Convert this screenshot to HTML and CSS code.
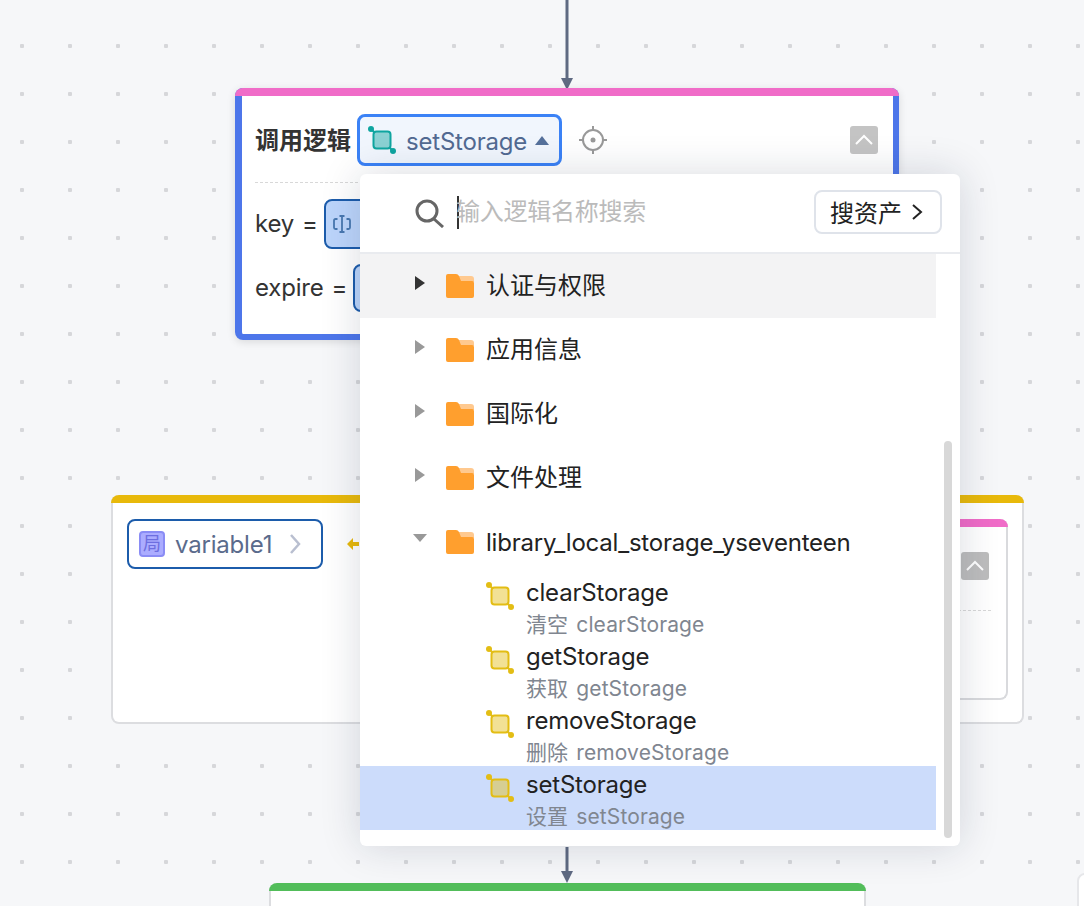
FILE: index.html
```html
<!DOCTYPE html>
<html lang="zh-CN">

<head>
    <meta charset="UTF-8">
    <title>调用逻辑</title>
    <link rel="stylesheet" href="styles.css">
</head>

<body>
    <svg class="defs" width="0" height="0">
        <symbol id="logic-icon" viewBox="0 0 28 28">
            <rect x="5.5" y="5.5" width="17" height="17" rx="3" fill="currentColor" fill-opacity="0.45" stroke="currentColor" stroke-width="2"></rect>
            <path d="M3 3l3 3M22 22l3 3" stroke="currentColor" stroke-width="2"></path>
            <circle cx="3" cy="3" r="3" fill="currentColor"></circle>
            <circle cx="25" cy="25" r="3" fill="currentColor"></circle>
        </symbol>
        <symbol id="folder-icon" viewBox="0 0 28 24">
            <path d="M13 2h12a3 3 0 0 1 3 3v3H13z" fill="#ffc98f"></path>
            <path d="M2 0h8q2 0 3 2l2 5h11a2 2 0 0 1 2 2v13a2 2 0 0 1-2 2H2a2 2 0 0 1-2-2V2a2 2 0 0 1 2-2z" fill="#ff9f2e"></path>
        </symbol>
        <symbol id="collapse-icon" viewBox="0 0 28 28">
            <path d="M6 18l8-8 8 8" fill="none" stroke="#fff" stroke-width="2"></path>
        </symbol>
    </svg>

    <main class="canvas">
        <!-- Connectors -->
        <svg class="arrow arrow-top" width="14" height="90" viewBox="0 0 14 90">
            <path d="M7 0v79" stroke="#5f6a82" stroke-width="3"></path>
            <path d="M1 78h12l-6 12z" fill="#5f6a82"></path>
        </svg>
        <svg class="arrow arrow-bottom" width="14" height="36" viewBox="0 0 14 36">
            <path d="M7 0v25" stroke="#5f6a82" stroke-width="3"></path>
            <path d="M1 24h12l-6 12z" fill="#5f6a82"></path>
        </svg>

        <!-- Call node -->
        <section class="node node-call">
            <div class="call-head">
                <span class="call-title">调用逻辑</span>
                <button class="logic-select">
                    <svg class="logic-select-icon" width="28" height="28"><use href="#logic-icon"></use></svg>
                    <span class="logic-select-name">setStorage</span>
                    <i class="caret-up"></i>
                </button>
                <svg class="locate" width="28" height="28" viewBox="0 0 28 28">
                    <circle cx="14" cy="14" r="10" fill="none" stroke="#999" stroke-width="2"></circle>
                    <circle cx="14" cy="14" r="2.5" fill="#999"></circle>
                    <path d="M14 0v4M14 24v4M0 14h4M24 14h4" stroke="#999" stroke-width="2"></path>
                </svg>
                <svg class="collapse" width="28" height="28"><use href="#collapse-icon"></use></svg>
            </div>
            <div class="param">
                <span class="param-name">key</span>
                <span class="param-eq">=</span>
                <span class="param-value">
                    <svg width="20" height="20" viewBox="0 0 20 20">
                        <path d="M5.500 5H3.500Q2 5 2 6.500v7Q2 15 3.500 15h2M14.500 5h2Q18 5 18 6.500v7q0 1.500-1.500 1.500h-2M7.500 2h5M7.500 18h5M10 2v16" fill="none" stroke="#4878b0" stroke-width="1.800"></path>
                    </svg>
                </span>
            </div>
            <div class="param param-short">
                <span class="param-name">expire</span>
                <span class="param-eq">=</span>
                <span class="param-value"></span>
            </div>
        </section>

        <!-- Variable assignment node -->
        <section class="node node-assign">
            <div class="var-pill">
                <span class="var-badge">局</span>
                <span class="var-name">variable1</span>
                <svg width="12" height="22" viewBox="0 0 12 22">
                    <path d="M2 2l8 9-8 9" fill="none" stroke="#b9bfd0" stroke-width="2.500"></path>
                </svg>
            </div>
            <svg class="assign-arrow" width="12" height="12" viewBox="0 0 12 12">
                <path d="M6 0v4h6v4H6v4L0 6z" fill="#e8b90b"></path>
            </svg>
            <div class="node node-inner">
                <svg class="collapse collapse-inner" width="28" height="28"><use href="#collapse-icon"></use></svg>
                <div class="inner-rule"></div>
            </div>
        </section>

        <section class="node node-next"></section>
        <section class="edge-card"></section>

        <!-- Logic picker dropdown -->
        <div class="picker">
            <div class="picker-search">
                <svg class="search-icon" width="30" height="30" viewBox="0 0 30 30">
                    <circle cx="12" cy="13" r="10" fill="none" stroke="#666" stroke-width="3"></circle>
                    <path d="M19 21l9 8" stroke="#666" stroke-width="3"></path>
                </svg>
                <span class="search-input">输入逻辑名称搜索</span>
                <button class="asset-btn">
                    <span class="asset-btn-text">搜资产</span>
                    <svg width="12" height="18" viewBox="0 0 12 18">
                        <path d="M2 2l8 7-8 7" fill="none" stroke="#222" stroke-width="2"></path>
                    </svg>
                </button>
            </div>
            <div class="picker-body">
                <ul class="tree">
                    <li class="tree-row is-hover">
                        <i class="tri-right"></i>
                        <svg class="folder" width="28" height="24"><use href="#folder-icon"></use></svg>
                        <span class="tree-label-cn">认证与权限</span>
                    </li>
                    <li class="tree-row">
                        <i class="tri-right"></i>
                        <svg class="folder" width="28" height="24"><use href="#folder-icon"></use></svg>
                        <span class="tree-label-cn">应用信息</span>
                    </li>
                    <li class="tree-row">
                        <i class="tri-right"></i>
                        <svg class="folder" width="28" height="24"><use href="#folder-icon"></use></svg>
                        <span class="tree-label-cn">国际化</span>
                    </li>
                    <li class="tree-row">
                        <i class="tri-right"></i>
                        <svg class="folder" width="28" height="24"><use href="#folder-icon"></use></svg>
                        <span class="tree-label-cn">文件处理</span>
                    </li>
                    <li class="tree-row">
                        <i class="tri-down"></i>
                        <svg class="folder" width="28" height="24"><use href="#folder-icon"></use></svg>
                        <span class="tree-label-latin">library_local_storage_yseventeen</span>
                    </li>
                    <li class="tree-leaf">
                        <svg class="leaf-icon" width="28" height="28"><use href="#logic-icon"></use></svg>
                        <div>
                            <div class="leaf-name">clearStorage</div>
                            <div class="leaf-desc">清空 clearStorage</div>
                        </div>
                    </li>
                    <li class="tree-leaf">
                        <svg class="leaf-icon" width="28" height="28"><use href="#logic-icon"></use></svg>
                        <div>
                            <div class="leaf-name">getStorage</div>
                            <div class="leaf-desc">获取 getStorage</div>
                        </div>
                    </li>
                    <li class="tree-leaf">
                        <svg class="leaf-icon" width="28" height="28"><use href="#logic-icon"></use></svg>
                        <div>
                            <div class="leaf-name">removeStorage</div>
                            <div class="leaf-desc">删除 removeStorage</div>
                        </div>
                    </li>
                    <li class="tree-leaf is-selected">
                        <svg class="leaf-icon" width="28" height="28"><use href="#logic-icon"></use></svg>
                        <div>
                            <div class="leaf-name">setStorage</div>
                            <div class="leaf-desc">设置 setStorage</div>
                        </div>
                    </li>
                </ul>
                <div class="scroll-track"><div class="scroll-thumb"></div></div>
            </div>
        </div>
    </main>
</body>
</html>
```

FILE: styles.css
```css
/* General Reset */
* {
    margin: 0;
    padding: 0;
    box-sizing: border-box;
}

body {
    font-family: Inter, "Noto Sans CJK SC", sans-serif;
    font-size: 24px;
    color: #333;
    background-color: #f6f7f9;
}

.defs {
    position: absolute;
}

/* Canvas */
.canvas {
    position: relative;
    height: 906px;
    overflow: hidden;
    background-color: #f6f7f9;
    background-image: radial-gradient(circle at center, #d6d7da 2px, transparent 2.5px);
    background-size: 48px 48px;
    background-position: -2px 22px;
}

.arrow {
    position: absolute;
    left: 560px;
}

.arrow-top {
    top: 0;
}

.arrow-bottom {
    top: 847px;
}

/* Nodes: coloured bar runs the full width over the side borders */
.node {
    position: absolute;
    background-color: #fff;
    border-radius: 8px;
}

.node::before {
    content: "";
    position: absolute;
    top: 0;
    left: -2px;
    right: -2px;
    height: 8px;
    background-color: var(--bar);
    border-radius: 8px 8px 0 0;
}

/* Call node */
.node-call {
    --bar: #f06cc8;
    left: 235px;
    top: 88px;
    width: 664px;
    height: 252px;
    padding: 26px 15px 0 13px;
    border: 6px solid #4d76ea;
    border-left-width: 7px;
    border-top: 0;
    box-shadow: 0 2px 8px rgba(0, 0, 0, 0.12);
}

.node-call::before {
    left: -7px;
    right: -6px;
}

.call-head {
    display: flex;
    align-items: center;
    height: 69px;
    margin-bottom: 16px;
    padding-bottom: 16px;
    border-bottom: 1px dashed #d8d8d8;
}

.call-title {
    font-weight: 700;
    margin: 0 6px 4px 0;
    white-space: nowrap;
}

.logic-select {
    display: flex;
    align-items: center;
    flex: none;
    width: 205px;
    height: 52px;
    padding-left: 8px;
    font: inherit;
    color: #526a92;
    background-color: #f1f6fd;
    border: 3px solid #3b82f6;
    border-radius: 8px;
}

.logic-select-icon {
    color: #0fa5a0;
    margin-right: 10px;
}

.logic-select-name {
    margin-top: 2px;
    letter-spacing: -0.2px;
}

.caret-up {
    margin-left: 8px;
    border-left: 7px solid transparent;
    border-right: 7px solid transparent;
    border-bottom: 9px solid #55709b;
}

.locate {
    margin-left: 17px;
}

.collapse {
    margin-left: auto;
    background-color: #c4c4c4;
    border-radius: 3px;
}

.param {
    display: flex;
    align-items: center;
    height: 50px;
    margin-bottom: 15px;
}

.param-short {
    height: 48px;
}

.param-name {
    margin: 0 8px 2px 0;
    letter-spacing: -0.2px;
}

.param-eq {
    margin: 0 6px 2px 0;
}

.param-value {
    display: flex;
    align-items: center;
    width: 200px;
    height: 100%;
    padding-left: 6px;
    background-color: #bcd5fb;
    border: 2px solid #1c5cab;
    border-radius: 8px;
}

/* Assignment node */
.node-assign {
    --bar: #e8b90b;
    display: flex;
    left: 111px;
    top: 495px;
    width: 913px;
    height: 229px;
    padding: 24px 14px 16px;
    border: 2px solid #dcdde0;
    border-top: 0;
}

.var-pill {
    display: flex;
    align-items: center;
    flex: none;
    width: 196px;
    height: 50px;
    padding-left: 10px;
    border: 2px solid #1c5cab;
    border-radius: 8px;
}

.var-badge {
    width: 26px;
    height: 26px;
    margin-right: 10px;
    font-size: 18px;
    line-height: 22px;
    text-align: center;
    color: #6d6ee0;
    background-color: #abacff;
    border: 2px solid #8a8cf5;
    border-radius: 4px;
}

.var-name {
    margin-right: 17px;
    color: #5a6b8c;
    letter-spacing: -0.2px;
}

.assign-arrow {
    margin: 19px 0 0 24px;
}

.node-inner {
    --bar: #f06cc8;
    position: relative;
    display: flex;
    flex-direction: column;
    width: 500px;
    height: 181px;
    margin-left: auto;
    padding: 33px 17px 0;
    border: 2px solid #d9dadd;
    border-top: 0;
}

.collapse-inner {
    flex: none;
    background-color: #bdbdbd;
}

.inner-rule {
    margin-top: 30px;
    margin-right: -2px;
    border-top: 1px dashed #d8d8d8;
}

.node-next {
    --bar: #52bd5a;
    left: 269px;
    top: 883px;
    width: 597px;
    height: 80px;
    border: 2px solid #dcdde0;
    border-top: 0;
}

.edge-card {
    position: absolute;
    left: 1077px;
    top: 873px;
    width: 100px;
    height: 100px;
    background-color: #fff;
    border: 2px solid #e6e7ea;
    border-radius: 8px;
}

/* Picker dropdown */
.picker {
    position: absolute;
    left: 360px;
    top: 174px;
    display: flex;
    flex-direction: column;
    width: 600px;
    height: 672px;
    background-color: #fff;
    border-radius: 6px;
    box-shadow: 0 0 40px rgba(20, 30, 60, 0.16);
}

.picker-search {
    display: flex;
    align-items: center;
    flex: none;
    height: 80px;
    padding: 0 18px 2px 55px;
    border-bottom: 2px solid #e9ebef;
}

.search-icon {
    margin-top: 2px;
}

.search-input {
    flex: 1;
    height: 33px;
    margin-left: 12px;
    line-height: 31px;
    letter-spacing: -0.25px;
    text-indent: -3px;
    color: #bbb;
    border-left: 2px solid #333;
}

.asset-btn {
    display: flex;
    align-items: center;
    gap: 9px;
    width: 128px;
    height: 44px;
    padding-left: 14px;
    font: inherit;
    color: #222;
    background-color: #fff;
    border: 2px solid #dfe3ea;
    border-radius: 8px;
}

.asset-btn-text {
    margin-bottom: 2px;
}

.picker-body {
    position: relative;
    flex: 1;
}

.tree {
    width: 576px;
    list-style-type: none;
}

.tree-row {
    display: flex;
    align-items: center;
    height: 64px;
    padding-left: 55px;
    color: #222;
}

.tree-row.is-hover {
    background-color: #f3f3f4;
}

.tree-label-cn {
    margin-bottom: 5px;
}

.tree-label-latin {
    letter-spacing: -0.22px;
}

.tri-right {
    width: 0;
    margin-bottom: 6px;
    border-top: 7.500px solid transparent;
    border-bottom: 7.500px solid transparent;
    border-left: 10px solid #999;
}

.is-hover .tri-right {
    border-left-color: #333;
}

.tri-down {
    width: 0;
    margin: 0 -2px 8px -2px;
    border-left: 7.500px solid transparent;
    border-right: 7.500px solid transparent;
    border-top: 8px solid #999;
}

.folder {
    margin: 0 12px 0 21px;
}

.tree-leaf {
    display: flex;
    height: 64px;
    padding: 3px 0 0 126px;
}

.tree-leaf.is-selected {
    background-color: #ccdcfb;
}

.leaf-icon {
    flex: none;
    margin: 5px 12px 0 0;
    color: #e3bd14;
}

.leaf-name {
    height: 32px;
    line-height: 32px;
    letter-spacing: -0.2px;
    color: #222;
}

.leaf-desc {
    height: 32px;
    font-size: 21px;
    line-height: 32px;
    letter-spacing: 0.12px;
    word-spacing: 2px;
    color: #808690;
}

.scroll-track {
    position: absolute;
    top: 0;
    right: 8px;
    bottom: 0;
    width: 8px;
}

.scroll-thumb {
    position: absolute;
    top: 187px;
    bottom: 8px;
    width: 100%;
    background-color: #d8d8d8;
    border-radius: 4px;
}
```
